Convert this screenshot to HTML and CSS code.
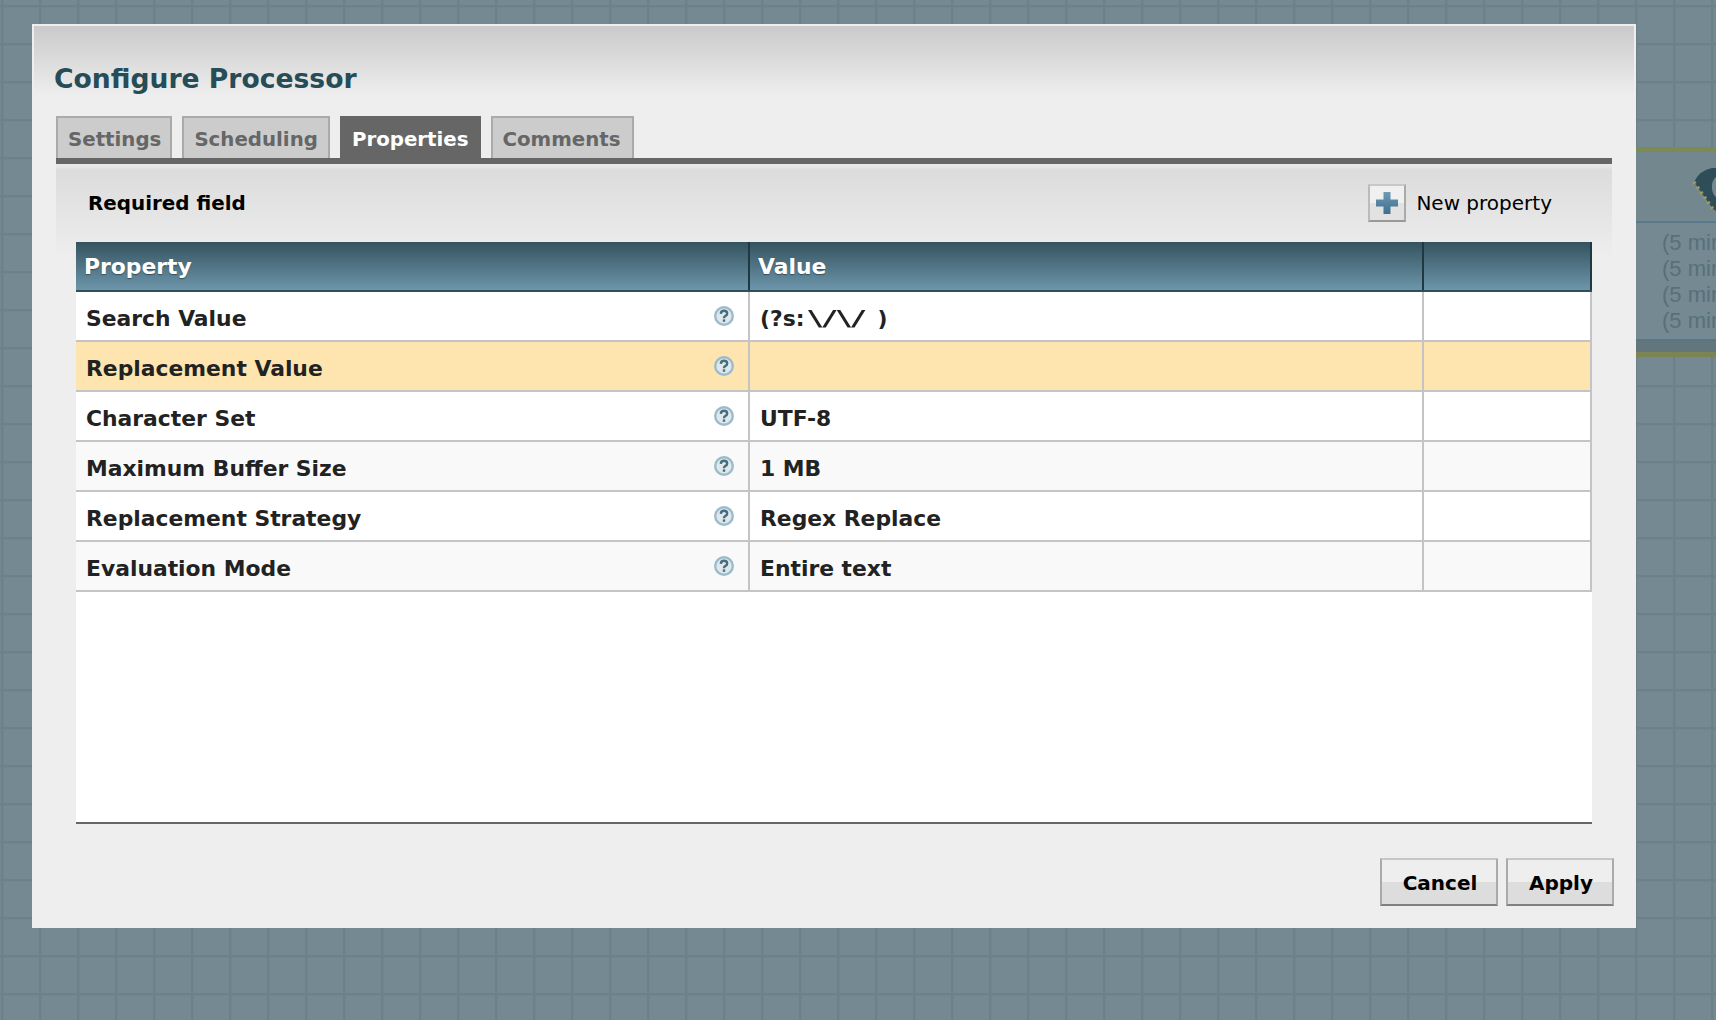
FILE: index.html
```html
<!DOCTYPE html>
<html lang="en">
<head>
<meta charset="utf-8">
<title>Configure Processor</title>
<link rel="stylesheet" href="styles.css">
</head>
<body>
<div class="canvas-node">
  <div class="node-head">
    <svg class="chip" width="24" height="50" viewBox="0 0 24 50">
      <path d="M2 17 Q8 5 20 3 L24 3 L24 46 L21 44 Z" fill="#2f4d58"/>
      <path d="M24 12 Q19 16 20 24 Q21 30 24 32 Z" fill="#74898f"/>
      <path d="M4 17 l-3 1.5 M7.500 22 l-3 1.500 M11 27 l-3 1.500 M14.500 32 l-3 1.500 M18 37 l-3 1.500 M21.500 42 l-3 1.500" stroke="#a99a55" stroke-width="2.500"/>
    </svg>
  </div>
  <div class="node-stats"><div>(5 min</div><div>(5 min</div><div>(5 min</div><div>(5 min</div></div>
  <div class="node-foot"></div>
</div>
<main class="dialog">
  <h1 class="title">Configure Processor</h1>
  <nav class="tabs">
    <div class="tab">Settings</div>
    <div class="tab">Scheduling</div>
    <div class="tab active">Properties</div>
    <div class="tab">Comments</div>
  </nav>
  <section class="panel">
    <div class="toolbar">
      <span class="required">Required field</span>
      <span class="new-prop">
        <span class="plus-btn"><svg class="plus" width="24" height="24" viewBox="0 0 24 24"><defs><linearGradient id="pg" x1="0" y1="0" x2="0" y2="1"><stop offset="0" stop-color="#6f9ab2"/><stop offset="1" stop-color="#3d6f8e"/></linearGradient></defs><path d="M8.500 1h7v7.500H23v7h-7.500V23h-7v-7.500H1v-7h7.500z" fill="url(#pg)"/></svg></span>
        New property
      </span>
    </div>
    <div class="table">
      <div class="row head">
        <div class="cell">Property</div><div class="cell">Value</div><div class="cell"></div>
      </div>
      <div class="row odd">
        <div class="cell name">Search Value<svg class="help"><use href="#q"/></svg></div><div class="cell">(?s:<span class="slashes">\/\/</span> )</div><div class="cell"></div>
      </div>
      <div class="row warn">
        <div class="cell name">Replacement Value<svg class="help"><use href="#q"/></svg></div><div class="cell"></div><div class="cell"></div>
      </div>
      <div class="row odd">
        <div class="cell name">Character Set<svg class="help"><use href="#q"/></svg></div><div class="cell">UTF-8</div><div class="cell"></div>
      </div>
      <div class="row even">
        <div class="cell name">Maximum Buffer Size<svg class="help"><use href="#q"/></svg></div><div class="cell">1 MB</div><div class="cell"></div>
      </div>
      <div class="row odd">
        <div class="cell name">Replacement Strategy<svg class="help"><use href="#q"/></svg></div><div class="cell">Regex Replace</div><div class="cell"></div>
      </div>
      <div class="row even">
        <div class="cell name">Evaluation Mode<svg class="help"><use href="#q"/></svg></div><div class="cell">Entire text</div><div class="cell"></div>
      </div>
    </div>
  </section>
  <footer class="actions">
    <button class="btn cancel">Cancel</button>
    <button class="btn apply">Apply</button>
  </footer>
</main>
<svg width="0" height="0" class="defs">
  <symbol id="q" viewBox="0 0 20 20">
    <circle cx="10" cy="10" r="8.800" fill="#dfe9ed" stroke="#9dbccb" stroke-width="2.400"/>
    <path d="M6.800 7.800 Q7 4.800 10 4.800 Q13.200 4.800 13.200 7.500 Q13.200 9 11.200 10 Q10 10.600 10 12.200" fill="none" stroke="#466d7e" stroke-width="2.400"/>
    <rect x="8.800" y="13.400" width="2.400" height="2.400" fill="#466d7e"/>
  </symbol>
</svg>
</body>
</html>
```
FILE: styles.css
```css
html, body { margin: 0; height: 100%; }
body {
  width: 1716px;
  height: 1020px;
  overflow: hidden;
  position: relative;
  font-family: "DejaVu Sans", Verdana, sans-serif;
  background-color: #748991;
  background-image:
    linear-gradient(90deg, #6e8389 0, #6a7f86 1px, #6e8389 2px, transparent 3px),
    linear-gradient(180deg, #6e8389 0, #6a7f86 1px, #6e8389 2px, transparent 3px);
  background-size: 38px 38px;
  background-position: 1px 5px;
}
.defs { position: absolute; }
.canvas-node {
  position: absolute;
  left: 1636px;
  top: 147px;
  width: 80px;
  height: 210px;
  display: flex;
  flex-direction: column;
  border-top: 5px solid #7d8a50;
  border-bottom: 5px solid #7b8553;
  box-sizing: border-box;
}
.node-head {
  height: 71px;
  box-sizing: border-box;
  background: #72878e;
  border-bottom: 2px solid #5a7a8c;
  position: relative;
  overflow: hidden;
}
.chip { position: absolute; left: 56px; top: 13px; filter: blur(0.5px); }
.node-stats {
  flex: 1;
  background: #748991;
  padding: 7px 0 0 26px;
  font-family: "Liberation Sans", Arial, sans-serif;
  font-size: 22px;
  line-height: 26px;
  color: #57707a;
  white-space: nowrap;
  overflow: hidden;
}
.node-foot {
  height: 13px;
  box-sizing: border-box;
  background: #62767c;
  border-top: 2px solid #587688;
}
.dialog {
  position: absolute;
  left: 32px;
  top: 24px;
  width: 1604px;
  height: 904px;
  box-sizing: border-box;
  background: linear-gradient(180deg, #cacaca 0, #eeeeee 70px, #eeeeee 100%);
  border: 2px solid #eeeeee;
  border-bottom: 0;
  display: flex;
  flex-direction: column;
}
.title {
  margin: 0;
  padding: 35px 0 0 20px;
  height: 55px;
  font-size: 26.6px;
  line-height: 36px;
  font-weight: 700;
  color: #264c58;
}
.tabs {
  display: flex;
  gap: 10px;
  margin-left: 22px;
  height: 42px;
}
.tab {
  box-sizing: border-box;
  height: 42px;
  padding: 0 10px;
  border: 2px solid #aaaaaa;
  border-bottom: 0;
  background: #cccccc;
  color: #666666;
  font-size: 19.800px;
  line-height: 43px;
  font-weight: 700;
}
.tab:first-child { padding-right: 9px; }
.tab:last-child { padding-right: 11px; }
.tab.active {
  background: #666666;
  border-color: #666666;
  color: #ffffff;
}
.panel {
  margin: 0 22px;
  border-top: 6px solid #666666;
  background: linear-gradient(180deg, #e8e8e8 0, #e8e8e8 2px, #dcdcdc 6px, #eeeeee 96px);
  padding: 0 20px;
  display: flex;
  flex-direction: column;
}
.toolbar {
  height: 78px;
  display: flex;
  align-items: center;
  justify-content: space-between;
  padding: 0 40px 0 12px;
  color: #000;
}
.required { font-size: 19.900px; font-weight: 700; }
.new-prop { display: flex; align-items: center; gap: 10px; font-size: 20px; }
.plus-btn {
  box-sizing: border-box;
  width: 38px;
  height: 38px;
  display: flex;
  align-items: center;
  justify-content: center;
  border: 2px solid;
  border-color: #c8c8c8 #aaaaaa #999999 #bbbbbb;
  background: linear-gradient(180deg, #f0f0f0 50%, #e2e2e2 50%);
}
.plus { filter: blur(0.6px); }
.table {
  height: 582px;
  box-sizing: border-box;
  background: #ffffff;
  border-bottom: 2px solid #666666;
}
.row {
  display: grid;
  grid-template-columns: 674px 674px 168px;
  grid-template-rows: 48px;
  height: 50px;
  box-sizing: border-box;
  border-bottom: 2px solid #c4c4c4;
  color: #222222;
  font-size: 21.850px;
  font-weight: 700;
}
.cell {
  box-sizing: border-box;
  border-right: 2px solid #c4c4c4;
  padding: 2.500px 0 0 10px;
  line-height: 48px;
  position: relative;
  white-space: nowrap;
}
.slashes {
  display: inline-block;
  font-weight: 400;
  transform: scaleX(1.95);
  transform-origin: left center;
  margin: 0 32px 0 4px;
}
.row.odd { background: #ffffff; }
.row.even { background: #f9f9f9; }
.row.warn { background: #fee5b0; }
.row.head {
  background: linear-gradient(180deg, #34535f 0, #6d95aa 100%);
  border-bottom: 2px solid #2e4e5a;
  color: #ffffff;
  text-shadow: 0 1px 1px #33505c;
}
.row.head .cell {
  border-right-color: #1f3843;
  padding: 1px 0 0 8px;
}
.help {
  position: absolute;
  left: 638px;
  top: 14px;
  width: 20px;
  height: 20px;
  filter: blur(0.4px);
}
.actions {
  display: flex;
  justify-content: flex-end;
  gap: 8px;
  padding: 34px 20px 0 0;
}
.btn {
  box-sizing: border-box;
  height: 48px;
  padding: 1px 0 0 2px;
  border: 2px solid;
  border-color: #c6c6c6 #aaaaaa #808080 #aaaaaa;
  background: linear-gradient(180deg, #eeeeee 50%, #dddddd 50%);
  font-family: inherit;
  font-size: 20px;
  font-weight: 700;
  color: #000;
}
.cancel { width: 118px; }
.apply { width: 108px; }
```
